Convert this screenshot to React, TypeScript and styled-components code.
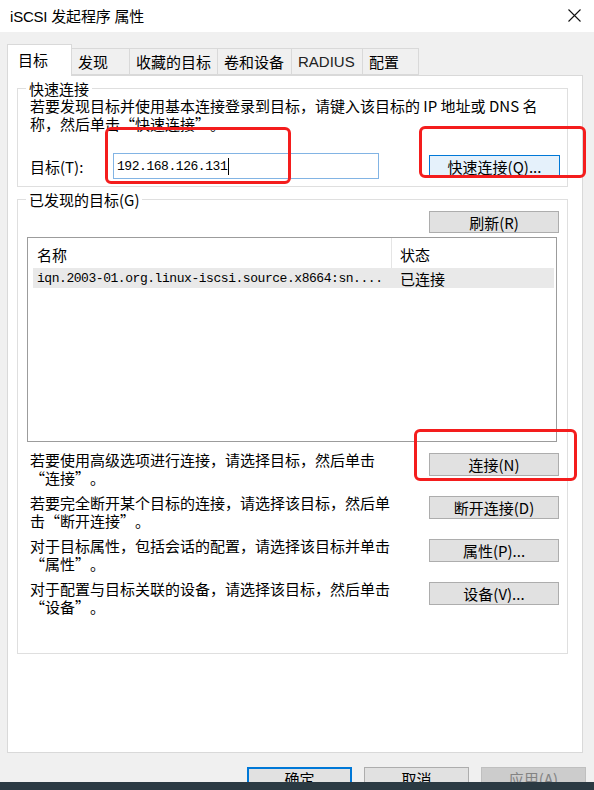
import styled, { createGlobalStyle } from 'styled-components'

const GlobalStyle = createGlobalStyle`
    html, body {
        margin: 0;
        padding: 0;
        background: #f0f0f0;
    }
    body {
        font-family: "Noto Sans CJK SC", "Liberation Sans", sans-serif;
        color: #000;
    }
    * {
        box-sizing: border-box;
    }
`

const Screen = styled.div`
    position: relative;
    width: 594px;
    height: 790px;
    overflow: hidden;
    display: flex;
    flex-direction: column;
`

const Dialog = styled.div`
    height: 782px;
    overflow: hidden;
    background: #f0f0f0;
    display: flex;
    flex-direction: column;
`

const TitleBar = styled.div`
    height: 32px;
    flex: none;
    background: #fff;
    display: flex;
    align-items: center;
    justify-content: space-between;
    padding: 0 13px 2px 10px;
`

const Title = styled.span`
    font-family: "Liberation Sans", "Noto Sans CJK SC", sans-serif;
    font-size: 15px;
    letter-spacing: -0.2px;
`

const CloseButton = styled.div`
    width: 14px;
    height: 14px;
    display: flex;
    align-items: center;
    justify-content: center;
`

const Body = styled.div`
    padding: 12px 11px 0 7px;
`

const TabStrip = styled.div`
    display: flex;
    align-items: flex-end;
    height: 31px;
`

const Tab = styled.div<{ $w: number; $active?: boolean }>`
    width: ${(p) => p.$w}px;
    height: ${(p) => (p.$active ? 32 : 27)}px;
    margin-bottom: ${(p) => (p.$active ? -1 : 0)}px;
    position: relative;
    z-index: ${(p) => (p.$active ? 1 : 0)};
    background: ${(p) => (p.$active ? '#fff' : '#f0f0f0')};
    border: 1px solid #d9d9d9;
    border-bottom: ${(p) => (p.$active ? 'none' : '1px solid #d9d9d9')};
    border-left: ${(p) => (p.$active ? '1px solid #d9d9d9' : 'none')};
    display: flex;
    align-items: center;
    padding-left: ${(p) => (p.$active ? 10 : 6)}px;
    padding-bottom: ${(p) => (p.$active ? 3 : 0)}px;
    font-size: 15px;
    white-space: nowrap;
`

const TabLatin = styled.span`
    font-family: "Liberation Sans", sans-serif;
    color: #222;
`

const Panel = styled.div`
    height: 678px;
    background: #fff;
    border: 1px solid #d9d9d9;
    padding: 4px 14px 0 9px;
    display: flex;
    flex-direction: column;
`

const GroupBox = styled.fieldset<{ $gap?: number }>`
    margin: ${(p) => p.$gap ?? 0}px 0 0 0;
    padding: 0;
    border: 1px solid #dfdfdf;
    min-width: 0;
`

const Legend = styled.legend`
    margin-left: 8px;
    padding: 0 3px;
    font-size: 15px;
    line-height: 17px;
`

const QuickBody = styled.div`
    padding: 0 7px 7px 12px;
`

const Hint = styled.p`
    margin: 0;
    font-size: 15px;
    line-height: 18px;
    white-space: nowrap;
`

// CJK quotation marks take a full cell in the dialog font
const Quote = styled.span<{ $open?: boolean }>`
    display: inline-block;
    width: 1em;
    height: 18px;
    line-height: 18px;
    vertical-align: top;
    text-align: ${(p) => (p.$open ? 'right' : 'left')};
`

const TargetRow = styled.div`
    margin-top: 20px;
    height: 26px;
    display: flex;
    align-items: center;
`

const FieldLabel = styled.span`
    width: 83px;
    font-size: 15px;
`

const TextBox = styled.div`
    width: 266px;
    height: 26px;
    border: 1px solid #82b4e4;
    display: flex;
    align-items: center;
    padding-left: 3px;
    font-family: "Liberation Mono", monospace;
    font-size: 13px;
    letter-spacing: -0.45px;
`

const Caret = styled.span`
    width: 1px;
    height: 17px;
    background: #000;
    margin-left: 1px;
`

const Button = styled.div<{ $w?: number; $h?: number; $variant?: 'default' | 'normal' | 'disabled' | 'primary' }>`
    width: ${(p) => p.$w ?? 130}px;
    height: ${(p) => p.$h ?? 23}px;
    flex: none;
    display: flex;
    align-items: center;
    justify-content: center;
    font-size: 15px;
    white-space: nowrap;
    background: ${(p) =>
        p.$variant === 'default' ? '#e5f1fb' : p.$variant === 'disabled' ? '#cccccc' : '#e1e1e1'};
    border: ${(p) =>
        p.$variant === 'default'
            ? '1px solid #0078d7'
            : p.$variant === 'primary'
              ? '2px solid #0078d7'
              : p.$variant === 'disabled'
                ? '1px solid #bfbfbf'
                : '1px solid #adadad'};
    color: ${(p) => (p.$variant === 'disabled' ? '#838383' : '#000')};
`

const PushRight = styled.div`
    margin-left: auto;
`

const FoundBody = styled.div`
    padding: 3px 8px 37px 9px;
    display: flex;
    flex-direction: column;
`

const ToolRow = styled.div`
    display: flex;
    justify-content: flex-end;
`

const ListView = styled.div`
    margin-top: 4px;
    margin-right: 2px;
    height: 205px;
    border: 1px solid #9c9c9c;
    background: #fff;
`

const ListHeader = styled.div`
    display: grid;
    grid-template-columns: 364px 1fr;
    height: 30px;
    font-size: 15px;
`

const HeaderCell = styled.div<{ $first?: boolean }>`
    display: flex;
    align-items: center;
    padding: 2px 0 0 ${(p) => (p.$first ? 9 : 8)}px;
    border-right: ${(p) => (p.$first ? '1px solid #e5e5e5' : 'none')};
`

const ListRow = styled.div`
    display: grid;
    grid-template-columns: 359px 1fr;
    height: 20px;
    margin: 0 2px 0 5px;
    background: #e9e9e9;
    align-items: center;
`

const MonoCell = styled.div`
    padding-left: 4px;
    font-family: "Liberation Mono", monospace;
    font-size: 13px;
    letter-spacing: -0.45px;
    white-space: nowrap;
    overflow: hidden;
`

const StatusCell = styled.div`
    padding-left: 8px;
    font-size: 15px;
`

const Actions = styled.div`
    margin-top: 9px;
    display: flex;
    flex-direction: column;
    gap: 7px;
`

const ActionRow = styled.div`
    display: flex;
    align-items: flex-start;
    justify-content: space-between;
    height: 36px;
    padding-left: 3px;
`

const ActionButton = styled(Button)`
    margin-top: 2px;
`

const Footer = styled.div`
    display: flex;
    justify-content: flex-end;
    gap: 12px;
    margin-top: 14px;
    padding-right: 8px;
`

const Taskbar = styled.div`
    height: 8px;
    background: #2b3a43;
`

const Annotation = styled.div`
    position: absolute;
    border: 3px solid #f41d1d;
    border-radius: 6px;
`

const actions = [
    { lines: ['若要使用高级选项进行连接，请选择目标，然后单击', '“连接”。'], label: '连接(N)' },
    { lines: ['若要完全断开某个目标的连接，请选择该目标，然后单', '击“断开连接”。'], label: '断开连接(D)' },
    { lines: ['对于目标属性，包括会话的配置，请选择该目标并单击', '“属性”。'], label: '属性(P)...' },
    { lines: ['对于配置与目标关联的设备，请选择该目标，然后单击', '“设备”。'], label: '设备(V)...' },
]

const tabs = [
    { name: '目标', w: 65, active: true },
    { name: '发现', w: 58 },
    { name: '收藏的目标', w: 88 },
    { name: '卷和设备', w: 74 },
    { name: 'RADIUS', w: 71, latin: true },
    { name: '配置', w: 56 },
]

const marks = [
    { left: 105, top: 127, width: 186, height: 57 },
    { left: 419, top: 126, width: 167, height: 52 },
    { left: 414, top: 429, width: 163, height: 52 },
]

const quoted = (s: string) =>
    s.split(/([“”])/).map((part, i) =>
        part === '“' || part === '”' ? (
            <Quote key={i} $open={part === '“'}>
                {part}
            </Quote>
        ) : (
            part
        )
    )

export default function App() {
    return (
        <Screen>
            <GlobalStyle />
            <Dialog>
                <TitleBar>
                    <Title>iSCSI 发起程序 属性</Title>
                    <CloseButton>
                        <svg width="13" height="13" viewBox="0 0 13 13">
                            <path d="M0.5 0.5 L12.5 12.5 M12.5 0.5 L0.5 12.5" stroke="#111" strokeWidth="1.1" fill="none" />
                        </svg>
                    </CloseButton>
                </TitleBar>

                <Body>
                    <TabStrip>
                        {tabs.map((t) => (
                            <Tab key={t.name} $w={t.w} $active={t.active}>
                                {t.latin ? <TabLatin>{t.name}</TabLatin> : t.name}
                            </Tab>
                        ))}
                    </TabStrip>

                    <Panel>
                        <GroupBox>
                            <Legend>快速连接</Legend>
                            <QuickBody>
                                <Hint>
                                    若要发现目标并使用基本连接登录到目标，请键入该目标的 IP 地址或 DNS 名
                                    <br />
                                    {quoted('称，然后单击“快速连接”。')}
                                </Hint>
                                <TargetRow>
                                    <FieldLabel>目标(T):</FieldLabel>
                                    <TextBox>
                                        192.168.126.131
                                        <Caret />
                                    </TextBox>
                                    <PushRight>
                                        <Button $w={131} $h={22} $variant="default">
                                            快速连接(Q)...
                                        </Button>
                                    </PushRight>
                                </TargetRow>
                            </QuickBody>
                        </GroupBox>

                        <GroupBox $gap={4}>
                            <Legend>已发现的目标(G)</Legend>
                            <FoundBody>
                                <ToolRow>
                                    <Button $h={22}>刷新(R)</Button>
                                </ToolRow>
                                <ListView>
                                    <ListHeader>
                                        <HeaderCell $first>名称</HeaderCell>
                                        <HeaderCell>状态</HeaderCell>
                                    </ListHeader>
                                    <ListRow>
                                        <MonoCell>iqn.2003-01.org.linux-iscsi.source.x8664:sn....</MonoCell>
                                        <StatusCell>已连接</StatusCell>
                                    </ListRow>
                                </ListView>
                                <Actions>
                                    {actions.map((a) => (
                                        <ActionRow key={a.label}>
                                            <Hint>
                                                {a.lines[0]}
                                                <br />
                                                {quoted(a.lines[1])}
                                            </Hint>
                                            <ActionButton>{a.label}</ActionButton>
                                        </ActionRow>
                                    ))}
                                </Actions>
                            </FoundBody>
                        </GroupBox>
                    </Panel>
                </Body>

                <Footer>
                    <Button $w={105} $variant="primary">确定</Button>
                    <Button $w={105}>取消</Button>
                    <Button $w={105} $variant="disabled">应用(A)</Button>
                </Footer>
            </Dialog>
            <Taskbar />

            {marks.map((m, i) => (
                <Annotation key={i} style={{ left: m.left, top: m.top, width: m.width, height: m.height }} />
            ))}
        </Screen>
    )
}
